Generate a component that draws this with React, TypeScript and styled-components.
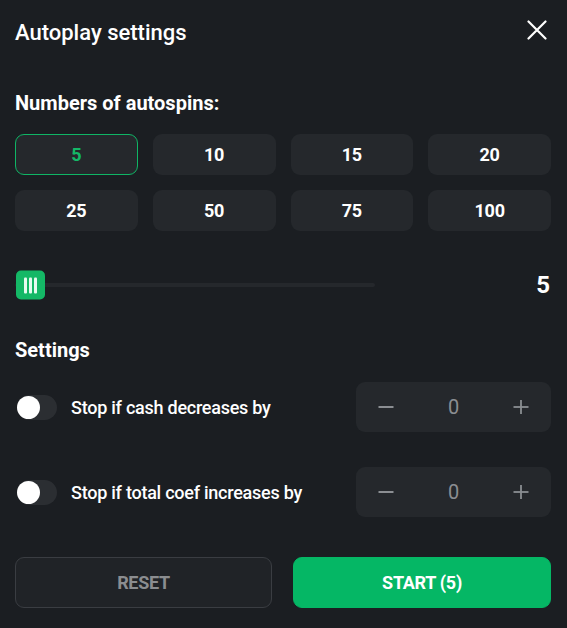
import React, { useState } from "react";
import styled, { createGlobalStyle } from "styled-components";

const GlobalStyle = createGlobalStyle`
  html, body { margin: 0; padding: 0; background: #1b1e22; }
  body { font-family: Roboto, "Liberation Sans", Arial, sans-serif; color: #fff; }
  * { box-sizing: border-box; }
`;

const Panel = styled.div`
  width: 567px;
  height: 628px;
  background: #1b1e22;
  padding: 19px 16px 0 15px;
  display: flex;
  flex-direction: column;
`;

const Header = styled.div`
  display: flex;
  align-items: center;
  justify-content: space-between;
  height: 28px;
`;

const Title = styled.h1`
  margin: 0;
  font-size: 22px;
  font-weight: 500;
  line-height: 28px;
  color: #fff;
`;

const CloseButton = styled.button`
  align-self: flex-start;
  width: 24px;
  height: 24px;
  padding: 0;
  margin: -1px 2px 0 0;
  border: none;
  background: none;
  display: flex;
  align-items: center;
  justify-content: center;
  cursor: pointer;
`;

const SectionLabel = styled.div<{ $top: number }>`
  margin-top: ${(p) => p.$top}px;
  font-size: 20px;
  font-weight: 700;
  line-height: 24px;
  color: #fff;
`;

const Grid = styled.div`
  margin-top: 19px;
  display: grid;
  grid-template-columns: repeat(4, 1fr);
  gap: 15px;
`;

const Chip = styled.button<{ $active: boolean }>`
  height: 41px;
  border-radius: 9px;
  border: 1px solid ${(p) => (p.$active ? "#0fb565" : "transparent")};
  background: #25282c;
  color: ${(p) => (p.$active ? "#14b867" : "#fff")};
  font-family: inherit;
  font-size: 18px;
  font-weight: 700;
  letter-spacing: -0.3px;
  cursor: pointer;
`;

const SliderRow = styled.div`
  margin-top: 39px;
  display: flex;
  align-items: center;
  height: 30px;
`;

const Track = styled.div`
  position: relative;
  width: 360px;
  height: 4px;
  background: #25282c;
  border-radius: 2px;
`;

const Thumb = styled.div`
  position: absolute;
  left: 1px;
  top: 50%;
  transform: translateY(-50%);
  width: 29px;
  height: 29px;
  border-radius: 5px;
  background: #14b866;
  display: flex;
  align-items: center;
  justify-content: center;
  gap: 2.5px;
`;

const Grip = styled.span`
  width: 2.5px;
  height: 16px;
  background: #e6fbef;
  border-radius: 1px;
`;

const SliderValue = styled.div`
  margin-left: auto;
  margin-right: 1px;
  font-size: 24px;
  font-weight: 700;
  color: #fff;
`;

const OptionList = styled.div`
  margin-top: 20px;
  display: flex;
  flex-direction: column;
  gap: 35px;
`;

const OptionRow = styled.div`
  display: flex;
  align-items: center;
  height: 50px;
`;

const Toggle = styled.button<{ $on: boolean }>`
  position: relative;
  width: 40px;
  height: 25px;
  padding: 0;
  margin-left: 2px;
  border: none;
  border-radius: 13px;
  background: ${(p) => (p.$on ? "#0fb565" : "#2b2e32")};
  cursor: pointer;
`;

const Knob = styled.span<{ $on: boolean }>`
  position: absolute;
  top: 1px;
  left: ${(p) => (p.$on ? "17px" : "0")};
  width: 23px;
  height: 23px;
  border-radius: 50%;
  background: #fff;
`;

const OptionLabel = styled.span`
  margin-left: 14px;
  font-size: 18px;
  font-weight: 500;
  color: #fff;
  letter-spacing: -0.25px;
`;

const Stepper = styled.div`
  margin-left: auto;
  width: 195px;
  height: 50px;
  border-radius: 9px;
  background: #25282c;
  display: grid;
  grid-template-columns: 60px 1fr 60px;
  align-items: center;
`;

const StepButton = styled.button`
  height: 100%;
  border: none;
  background: none;
  padding: 0;
  display: flex;
  align-items: center;
  justify-content: center;
  cursor: pointer;
`;

const StepValue = styled.div`
  text-align: center;
  font-size: 20px;
  font-weight: 400;
  color: #8b8e92;
`;

const Footer = styled.div`
  margin-top: 40px;
  display: grid;
  grid-template-columns: 257px 258px;
  justify-content: space-between;
`;

const ActionButton = styled.button<{ $primary?: boolean }>`
  height: 51px;
  border-radius: 9px;
  border: 1px solid ${(p) => (p.$primary ? "#05b765" : "#3a3d42")};
  background: ${(p) => (p.$primary ? "#05b765" : "#202327")};
  color: ${(p) => (p.$primary ? "#fff" : "#8b8d90")};
  font-family: inherit;
  font-size: 18px;
  font-weight: 700;
  letter-spacing: -0.3px;
  cursor: pointer;
`;

const Minus = () => (
  <svg width="16" height="16" viewBox="0 0 16 16">
    <line x1="0.5" y1="8" x2="15.5" y2="8" stroke="#8b8e92" strokeWidth="2" />
  </svg>
);

const Plus = () => (
  <svg width="16" height="16" viewBox="0 0 16 16">
    <line x1="0.5" y1="8" x2="15.5" y2="8" stroke="#8b8e92" strokeWidth="1.8" />
    <line x1="8" y1="1" x2="8" y2="15" stroke="#8b8e92" strokeWidth="1.8" />
  </svg>
);

const counts = [5, 10, 15, 20, 25, 50, 75, 100];

export default function App() {
  const [count, setCount] = useState(5);
  const [opts, setOpts] = useState([false, false]);
  const labels = ["Stop if cash decreases by", "Stop if total coef increases by"];

  return (
    <>
      <GlobalStyle />
      <Panel>
        <Header>
          <Title>Autoplay settings</Title>
          <CloseButton aria-label="Close">
            <svg width="20" height="20" viewBox="0 0 20 20">
              <path d="M1.5 1.5 L18.5 18.5 M18.5 1.5 L1.5 18.5" stroke="#fff" strokeWidth="2.2" strokeLinecap="round" />
            </svg>
          </CloseButton>
        </Header>

        <SectionLabel $top={44}>Numbers of autospins:</SectionLabel>
        <Grid>
          {counts.map((c) => (
            <Chip key={c} $active={c === count} onClick={() => setCount(c)}>
              {c}
            </Chip>
          ))}
        </Grid>

        <SliderRow>
          <Track>
            <Thumb>
              <Grip />
              <Grip />
              <Grip />
            </Thumb>
          </Track>
          <SliderValue>{count}</SliderValue>
        </SliderRow>

        <SectionLabel $top={38}>Settings</SectionLabel>

        <OptionList>
          {labels.map((l, i) => (
            <OptionRow key={l}>
              <Toggle
                $on={opts[i]}
                onClick={() => setOpts(opts.map((v, j) => (j === i ? !v : v)))}
              >
                <Knob $on={opts[i]} />
              </Toggle>
              <OptionLabel>{l}</OptionLabel>
              <Stepper>
                <StepButton aria-label="decrease">
                  <Minus />
                </StepButton>
                <StepValue>0</StepValue>
                <StepButton aria-label="increase">
                  <Plus />
                </StepButton>
              </Stepper>
            </OptionRow>
          ))}
        </OptionList>

        <Footer>
          <ActionButton>RESET</ActionButton>
          <ActionButton $primary>START ({count})</ActionButton>
        </Footer>
      </Panel>
    </>
  );
}
